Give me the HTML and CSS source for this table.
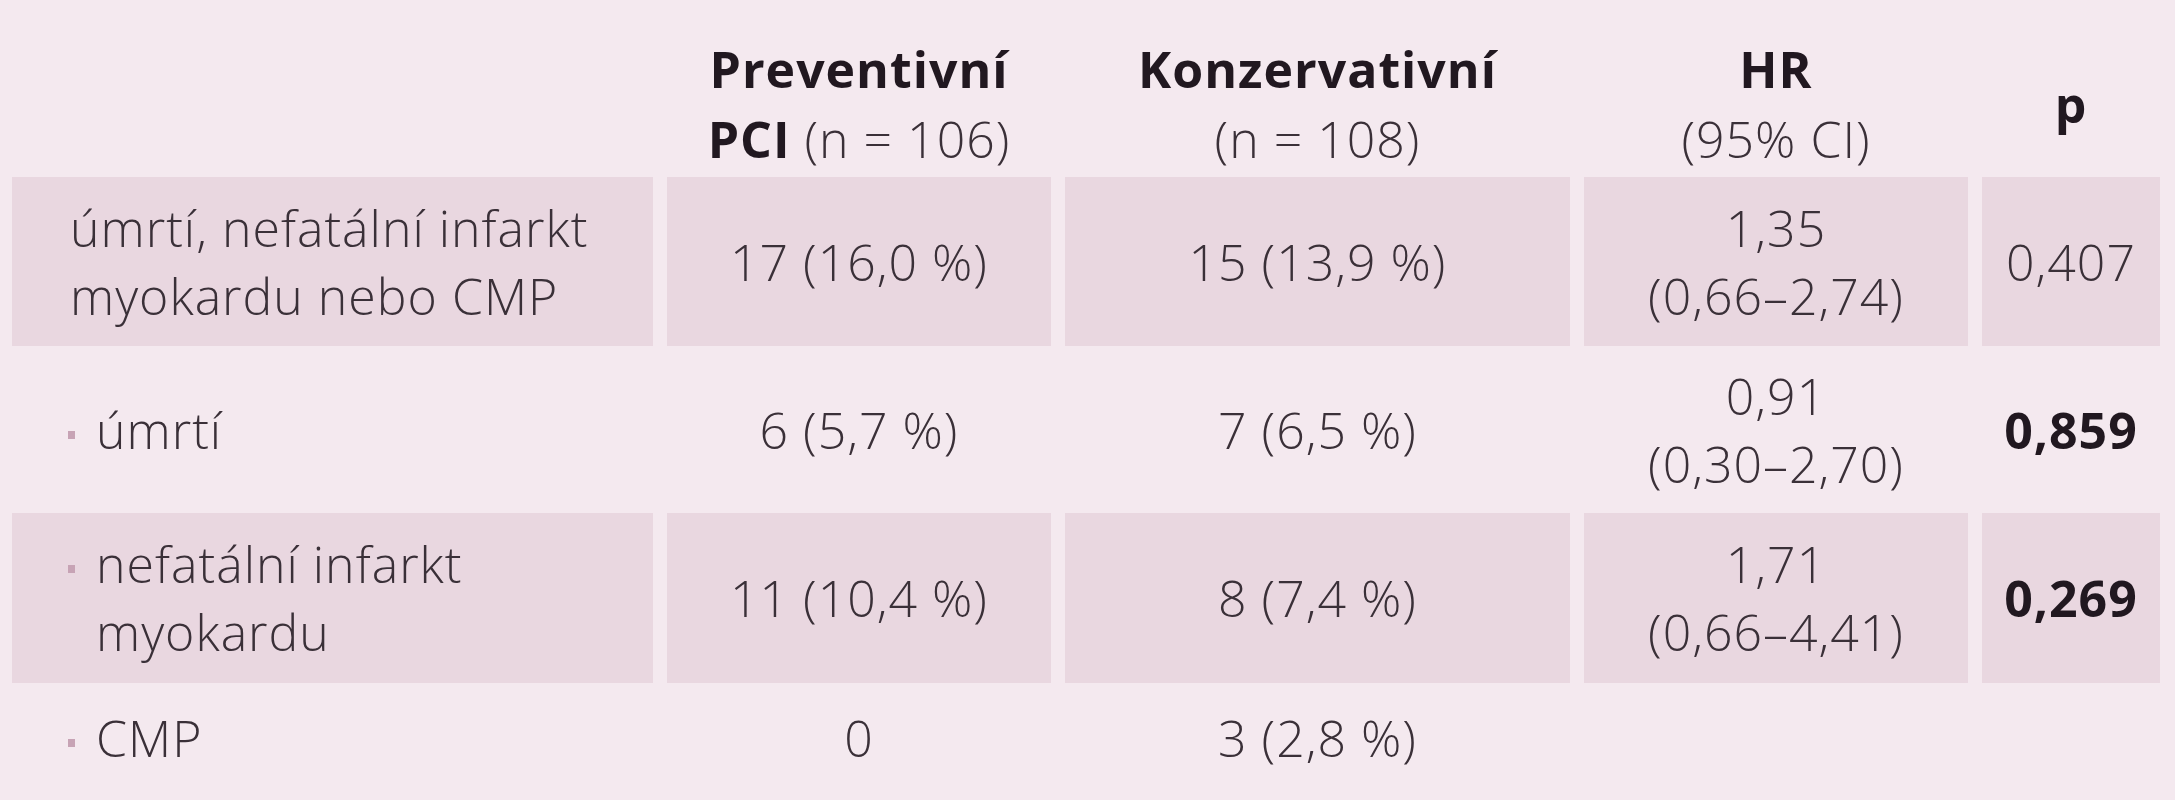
FILE: index.html
```html
<!DOCTYPE html>
<html lang="cs">
<head>
<meta charset="utf-8">
<title>Tabulka</title>
<link rel="stylesheet" href="styles.css">
</head>
<body>
<div class="table">
  <div class="cell head"></div>
  <div class="cell head"><span class="b">Preventivní</span><span><span class="b">PCI</span> (n = 106)</span></div>
  <div class="cell head"><span class="b">Konzervativní</span><span>(n = 108)</span></div>
  <div class="cell head"><span class="b">HR</span><span>(95% CI)</span></div>
  <div class="cell head"><span class="b">p</span></div>

  <div class="cell label shade"><span class="txt">úmrtí, nefatální infarkt<br>myokardu nebo CMP</span></div>
  <div class="cell shade">17 (16,0 %)</div>
  <div class="cell shade">15 (13,9 %)</div>
  <div class="cell shade"><span>1,35</span><span>(0,66–2,74)</span></div>
  <div class="cell shade">0,407</div>

  <div class="cell label sub"><span class="txt"><span class="bullet"></span>úmrtí</span></div>
  <div class="cell">6 (5,7 %)</div>
  <div class="cell">7 (6,5 %)</div>
  <div class="cell"><span>0,91</span><span>(0,30–2,70)</span></div>
  <div class="cell b">0,859</div>

  <div class="cell label sub shade"><span class="txt"><span class="bullet"></span>nefatální infarkt<br>myokardu</span></div>
  <div class="cell shade">11 (10,4 %)</div>
  <div class="cell shade">8 (7,4 %)</div>
  <div class="cell shade"><span>1,71</span><span>(0,66–4,41)</span></div>
  <div class="cell shade b">0,269</div>

  <div class="cell label sub"><span class="txt"><span class="bullet"></span>CMP</span></div>
  <div class="cell">0</div>
  <div class="cell">3 (2,8 %)</div>
  <div class="cell"></div>
  <div class="cell"></div>
</div>
</body>
</html>
```
FILE: styles.css
```css
html, body {
  margin: 0;
  padding: 0;
  background: #f4e9ef;
}
body {
  width: 2175px;
  height: 800px;
  overflow: hidden;
  font-family: "Open Sans", "Noto Sans", sans-serif;
  font-weight: 300;
  font-size: 50px;
  letter-spacing: 1px;
  color: #3a3038;
}
.table {
  display: grid;
  grid-template-columns: 641px 384px 505px 384px 178px;
  grid-template-rows: 177px 169px 167px 170px 110px;
  column-gap: 14px;
  padding: 0 15px 0 12px;
}
.cell {
  display: flex;
  flex-direction: column;
  align-items: center;
  justify-content: center;
  text-align: center;
  line-height: 68px;
  white-space: nowrap;
}
.head {
  line-height: 70px;
  padding-top: 30px;
}
.b {
  font-weight: 700;
  color: #211820;
}
.head span span {
  font-weight: 300;
}
.head span .b {
  font-weight: 700;
}
.shade {
  background: #e9d7e0;
}
.label {
  align-items: flex-start;
  text-align: left;
  padding-left: 58px;
}
.sub {
  padding-left: 84px;
}
.sub .txt {
  text-indent: -28px;
}
.bullet {
  display: inline-block;
  width: 7px;
  height: 8px;
  margin-right: 21px;
  vertical-align: 10px;
  background: #c7a3b5;
}
```
